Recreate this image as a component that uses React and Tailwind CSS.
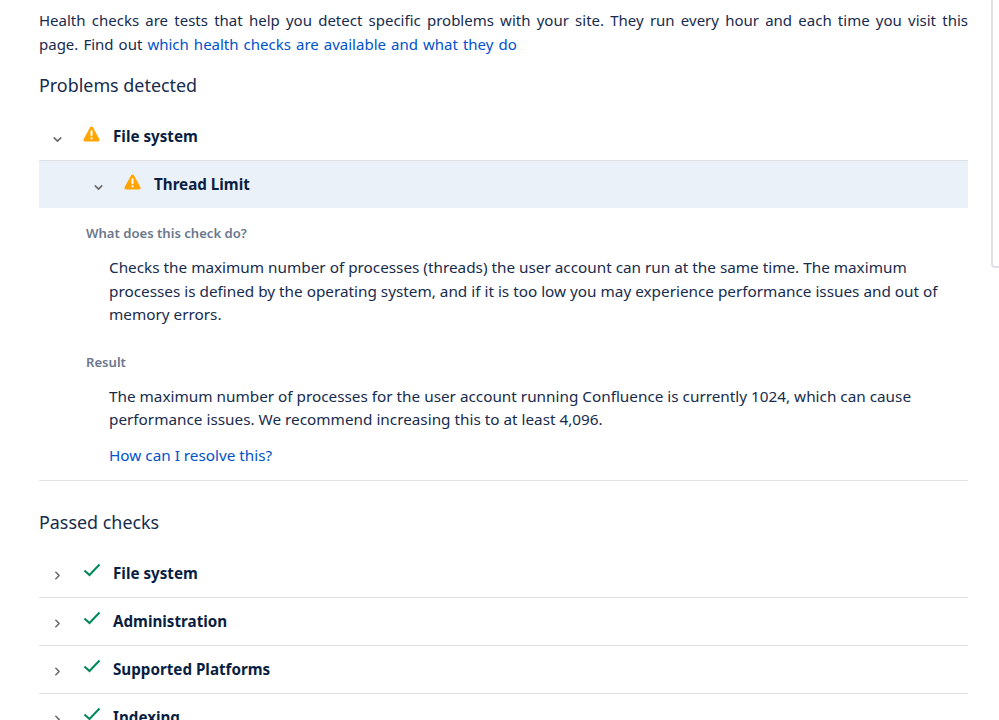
import { ChevronDown, ChevronRight } from 'lucide-react';

const PASSED = ['File system', 'Administration', 'Supported Platforms', 'Indexing'];

function WarnIcon() {
  return (
    <svg width="17" height="16" viewBox="0 0 17 16" className="shrink-0">
      <path d="M7.1 1.2c.6-1.1 2.2-1.1 2.8 0l6.5 12c.6 1.1-.2 2.3-1.4 2.3H2c-1.2 0-2-1.2-1.4-2.3z" fill="#ffa400" />
      <rect x="7.5" y="4.2" width="2" height="6" rx="1" fill="#fff" />
      <circle cx="8.5" cy="12.4" r="1.1" fill="#fff" />
    </svg>
  );
}

function CheckIcon() {
  return (
    <svg width="18" height="14" viewBox="0 0 18 14" className="shrink-0">
      <path d="M1.5 7.5l5 4.5L16.5 1.5" fill="none" stroke="#00875a" strokeWidth="2" />
    </svg>
  );
}

function Row({ open, icon, label, className = '' }) {
  const Chevron = open ? ChevronDown : ChevronRight;
  return (
    <div className={`flex items-center ${className}`}>
      <Chevron size={13} strokeWidth={3} className={`text-[#6b6b6b] w-[13px] shrink-0 ${open ? 'mt-1.5' : 'mt-1'}`} />
      <span className="ml-[19px] w-[30px] -mt-1.5 flex">{icon}</span>
      <span className="font-bold text-[15.2px] text-[#091e42]">{label}</span>
    </div>
  );
}

export default function App() {
  return (
    <div className="relative h-[720px] overflow-hidden bg-white pl-[39px] pr-[31px] pt-[8px] font-['Noto_Sans',sans-serif] text-[15.3px] text-[#172b4d]">
      {/* panel edge peeking in from the right */}
      <div className="absolute right-[-8px] top-[-8px] h-[276px] w-4 rounded-bl-[4px] border-2 border-[#dfe1e6]" />

      <p className="text-[15px] leading-[24px]">
        <span className="block [text-align-last:justify]">
          Health checks are tests that help you detect specific problems with your site. They run every hour and each time you visit this
        </span>
        <span className="block [word-spacing:1.15px]">
          page. Find out <a className="text-[#0052cc]">which health checks are available and what they do</a>
        </span>
      </p>

      <h2 className="mt-[16px] text-[17.9px] leading-[26px]">Problems detected</h2>

      <Row open icon={<WarnIcon />} label="File system" className="mt-[15px] h-[48px] pl-[12px] border-b border-[#dfe1e6]" />
      <Row open icon={<WarnIcon />} label="Thread Limit" className="h-[47px] pl-[53px] bg-[#ebf1f9]" />

      <div className="pl-[47px] pr-[20px]">
        <h3 className="mt-[15px] text-[13.1px] leading-[20px] font-semibold text-[#6b778c]">What does this check do?</h3>
        <p className="mt-[13px] pl-[23px] leading-[23.5px]">
          Checks the maximum number of processes (threads) the user account can run at the same time. The maximum processes is defined by the operating system, and if it is too low you may experience performance issues and out of memory errors.
        </p>
        <h3 className="mt-[25px] text-[13.1px] leading-[20px] font-semibold text-[#6b778c]">Result</h3>
        <p className="mt-[13px] pl-[23px] leading-[23.5px]">
          The maximum number of processes for the user account running Confluence is currently 1024, which can cause performance issues. We recommend increasing this to at least 4,096.
        </p>
        <p className="mt-[11px] pl-[23px] leading-[24px]">
          <a className="text-[#0052cc]">How can I resolve this?</a>
        </p>
      </div>

      <div className="mt-[13px] border-t border-[#dfe1e6]" />

      <h2 className="mt-[28px] text-[17.9px] leading-[26px]">Passed checks</h2>

      <div className="mt-[15px]">
        {PASSED.map((name) => (
          <Row key={name} icon={<CheckIcon />} label={name} className="h-[48px] pl-[12px] border-b border-[#dfe1e6]" />
        ))}
      </div>
    </div>
  );
}
